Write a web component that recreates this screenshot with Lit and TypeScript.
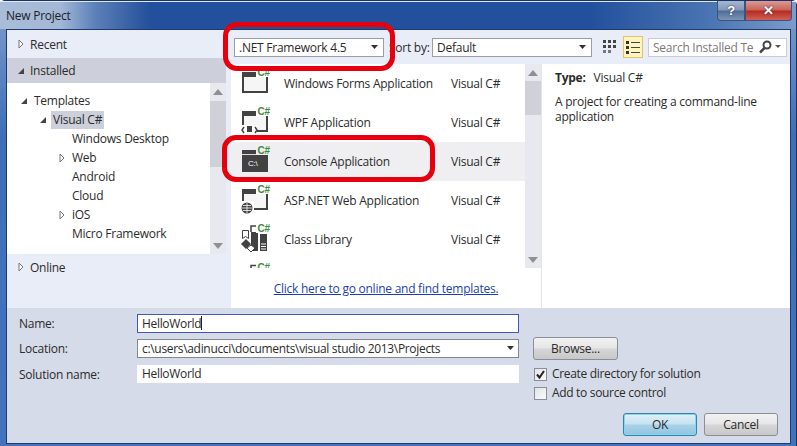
import { LitElement, html, css, svg } from "lit"
import { customElement } from "lit/decorators.js"

const DARK = "#424242"

// green language badge, shared by all template icons
const badge = svg`<rect x="16" y="0" width="15" height="10" fill="var(--row-bg, #fff)"/><text x="17.5" y="9" font-family="Liberation Sans, sans-serif" font-weight="700" font-size="10" fill="#3f8a3f">C#</text>`

const frame = svg`<path d="M3 6h24v19H3z" fill="#f6f6f6" stroke="${DARK}" stroke-width="2"/><rect x="2" y="5" width="26" height="5" fill="${DARK}"/>`

const rowIcons = {
  forms: svg`${frame}${badge}`,
  wpf: svg`${frame}<rect x="1" y="19" width="16" height="10" fill="#fff"/><path d="M4 21l-2 3 2 3M15 21l2 3-2 3" fill="none" stroke="${DARK}" stroke-width="1.5"/><rect x="7" y="20" width="5" height="6" fill="${DARK}"/>${badge}`,
  console: svg`<rect x="2" y="5" width="26" height="22" fill="${DARK}"/><rect x="2" y="9" width="20" height="1" fill="#ddd"/><text x="8" y="21" font-family="Liberation Sans, sans-serif" font-size="8" fill="#fff">C:\\</text>${badge}`,
  web: svg`${frame}<rect x="0" y="17" width="14" height="12" fill="#fff"/><circle cx="7" cy="24" r="5.5" fill="${DARK}"/><path d="M2 24h10M7 19v10M3 21.5h8M3 26.5h8" stroke="#fff" stroke-width=".8"/><rect x="14" y="24" width="14" height="2" fill="${DARK}"/>${badge}`,
  library: svg`<path d="M2.500 7.500h6v8l-3-2-3 2z" fill="#fff" stroke="${DARK}"/><path d="M11 9V3h7" fill="none" stroke="${DARK}" stroke-width="1.500"/><rect x="11" y="9" width="7" height="19" fill="${DARK}"/><path d="M20 11h7v17h-7z" fill="${DARK}"/><path d="M21 21h5M21 23.500h5M21 26h5" stroke="#fff"/><path d="M6 16l5 5-5 5-5-5z" fill="${DARK}"/><path d="M11 22l4 3-4 4-4-4z" fill="#fff" stroke="${DARK}"/>${badge}`,
  more: svg`<path d="M11 9V3.500h6" fill="none" stroke="${DARK}" stroke-width="1.500"/>${badge}`,
}

const templates = [
  { name: "Windows Forms Application", icon: rowIcons.forms },
  { name: "WPF Application", icon: rowIcons.wpf },
  { name: "Console Application", icon: rowIcons.console, selected: true },
  { name: "ASP.NET Web Application", icon: rowIcons.web },
  { name: "Class Library", icon: rowIcons.library },
  { name: "", icon: rowIcons.more },
]

const tree = [
  { label: "Templates", depth: 0, arrow: "open" },
  { label: "Visual C#", depth: 1, arrow: "open", active: true },
  { label: "Windows Desktop", depth: 2 },
  { label: "Web", depth: 2, arrow: "closed" },
  { label: "Android", depth: 2 },
  { label: "Cloud", depth: 2 },
  { label: "iOS", depth: 2, arrow: "closed" },
  { label: "Micro Framework", depth: 2 },
]

function arrow(kind?: string) {
  if (kind === "open") return html`<svg class="arrow" width="8" height="8" viewBox="0 0 8 8"><path d="M7 1v6H1z" fill="#444"/></svg>`
  if (kind === "closed") return html`<svg class="arrow" width="8" height="10" viewBox="0 0 8 10"><path d="M2 1l4 4-4 4z" fill="#fff" stroke="#777"/></svg>`
  return html`<span class="arrow"></span>`
}

const caret = html`<svg class="caret" width="7" height="4" viewBox="0 0 7 4"><path d="M0 0h7L3.500 4z" fill="#333"/></svg>`

function scrollbar(thumbTop: number, thumbHeight: number) {
  return html`<div class="scrollbar">
    <svg class="sb-up" width="10" height="6" viewBox="0 0 10 6"><path d="M5 0l5 6H0z" fill="#8f8f96"/></svg>
    <div class="sb-thumb" style="margin-top:${thumbTop}px;height:${thumbHeight}px"></div>
    <svg class="sb-down" width="10" height="6" viewBox="0 0 10 6"><path d="M0 0h10L5 6z" fill="#8f8f96"/></svg>
  </div>`
}

@customElement("app-root")
export class AppRoot extends LitElement {
  static styles = css`
    :host {
      display: block;
      width: 797px;
      height: 446px;
      overflow: hidden;
      position: relative;
      font: 12px "Open Sans", "Noto Sans", sans-serif;
      letter-spacing: -0.25px;
      color: #2b2b2b;
    }
    .window {
      height: 446px;
      box-sizing: border-box;
      display: flex;
      flex-direction: column;
      border: 1px solid #16336e;
      border-width: 1px 1px 0 0;
      border-radius: 5px 5px 0 0;
      background: linear-gradient(180deg, #7f9dca 0%, #3f6fb9 30%, #4274be 100%);
    }
    .title {
      height: 28px;
      flex: none;
      display: flex;
      align-items: flex-start;
      background: linear-gradient(90deg, #a9bcd8 0, #a4b8d6 60px, #5c80b8 95px, #23509c 150px, #22509c 590px, #4a75b2 710px, #7c9ccb 100%);
      box-shadow: inset 0 1px 0 #e2e8f2;
    }
    .title-text {
      margin: 6px 0 0 6px;
      font-size: 12px;
      color: #1a1f2b;
    }
    .caption {
      margin-left: auto;
      display: flex;
      margin-right: 4px;
    }
    .cap-btn {
      height: 20px;
      box-sizing: border-box;
      display: flex;
      align-items: center;
      justify-content: center;
      border: 1px solid #3c5478;
      border-top: none;
      color: #fff;
      font: 700 13px "Liberation Sans", sans-serif;
      text-shadow: 0 0 2px #223;
    }
    .cap-help {
      width: 28px;
      border-radius: 0 0 0 4px;
      background: linear-gradient(180deg, #a6b8d0 0%, #8298b8 48%, #4f6c98 52%, #7d94b8 100%);
    }
    .cap-close {
      width: 47px;
      border-radius: 0 0 4px 0;
      background: linear-gradient(180deg, #dc9a94 0%, #c8625a 48%, #b42a20 52%, #d0605a 100%);
    }
    .client {
      flex: 1;
      margin: 0 5px 2px 6px;
      display: flex;
      flex-direction: column;
      border: 1px solid #1f3a72;
      min-height: 0;
    }
    .main {
      height: 278px;
      flex: none;
      display: flex;
      background: #e9edf8;
    }
    .side {
      width: 224px;
      flex: none;
      display: flex;
      flex-direction: column;
    }
    .section {
      display: flex;
      align-items: center;
      gap: 5px;
      padding-left: 10px;
    }
    .section.recent {
      height: 28px;
      flex: none;
    }
    .section.installed {
      height: 25px;
      flex: none;
      width: 219px;
      box-sizing: border-box;
      background: #cdd0da;
    }
    .section.online {
      height: 26px;
      flex: none;
    }
    .tree-wrap {
      display: flex;
      height: 171px;
      flex: none;
      width: 219px;
    }
    .tree {
      flex: 1;
      background: #fff;
      padding-top: 8px;
      box-sizing: border-box;
    }
    .tree-item {
      height: 19px;
      display: flex;
      align-items: center;
    }
    .tree-item .arrow {
      width: 8px;
      flex: none;
      margin-right: 4px;
    }
    .tree-label {
      padding: 0 2px;
      line-height: 18px;
    }
    .tree-label.active {
      background: #cdd0da;
    }
    .d0 { padding-left: 13px; }
    .d1 { padding-left: 32px; }
    .d2 { padding-left: 51px; }
    .scrollbar {
      width: 16px;
      flex: none;
      background: #e8e9ef;
      display: flex;
      flex-direction: column;
      align-items: center;
      box-sizing: border-box;
      padding: 6px 0 5px;
    }
    .sb-thumb {
      width: 100%;
      background: #d0d1d8;
    }
    .sb-down {
      margin-top: auto;
    }
    .center {
      flex: 1;
      min-width: 0;
      display: flex;
      flex-direction: column;
    }
    .toolbar {
      height: 34px;
      flex: none;
      display: flex;
      align-items: center;
      padding-left: 3px;
      box-sizing: border-box;
    }
    .combo {
      height: 19px;
      box-sizing: border-box;
      background: #fff;
      border: 1px solid #9a9ca8;
      display: flex;
      align-items: center;
      padding: 0 5px 0 4px;
    }
    .combo .caret {
      margin-left: auto;
    }
    .framework { width: 150px; }
    .sort-label {
      width: 48px;
      flex: none;
      box-sizing: border-box;
      padding-left: 5px;
      white-space: nowrap;
    }
    .sort { width: 160px; }
    .view-grid {
      margin-left: 10px;
      width: 16px;
      height: 16px;
    }
    .view-list {
      margin-left: 5px;
      width: 20px;
      height: 22px;
      box-sizing: border-box;
      background: #fdf4bf;
      border: 1px solid #e5c365;
      display: flex;
      align-items: center;
      justify-content: center;
    }
    .search {
      margin-left: 5px;
      width: 139px;
      height: 19px;
      box-sizing: border-box;
      background: #fff;
      border: 1px solid #c8ccd8;
      display: flex;
      align-items: center;
      padding: 0 3px 0 4px;
      color: #7a7a7a;
      overflow: hidden;
    }
    .search-text {
      flex: 1;
      white-space: nowrap;
      overflow: hidden;
    }
    .panes {
      flex: 1;
      display: flex;
      background: #fff;
      min-height: 0;
    }
    .list-col {
      width: 310px;
      flex: none;
      border-right: 1px solid #e4e5ec;
      display: flex;
      flex-direction: column;
    }
    .list-wrap {
      height: 204px;
      flex: none;
      display: flex;
    }
    .list {
      flex: 1;
      overflow: hidden;
    }
    .row {
      height: 39px;
      display: flex;
      align-items: center;
      --row-bg: #fff;
    }
    .row.selected {
      background: #efeff2;
      --row-bg: #efeff2;
    }
    .row-icon {
      margin: 3px 0 0 9px;
      flex: none;
      align-self: flex-start;
    }
    .row-name {
      margin-left: 11px;
      width: 167px;
      flex: none;
    }
    .link-row {
      flex: 1;
      display: flex;
      align-items: center;
      justify-content: center;
    }
    .link {
      color: #1c3fae;
      text-decoration: underline;
    }
    .details {
      flex: 1;
      padding: 6px 13px;
      line-height: 15px;
    }
    .type-line {
      margin-bottom: 9px;
    }
    .type-line b {
      font-weight: 700;
      margin-right: 5px;
    }
    .footer {
      flex: 1;
      background: #d6dbe9;
      display: flex;
      padding: 6px 0 0 12px;
      min-height: 0;
    }
    .form {
      width: 500px;
      flex: none;
      display: grid;
      grid-template-columns: 118px 382px;
      grid-template-rows: 25px 26px 25px;
      align-content: start;
      align-items: start;
    }
    .form-label {
      line-height: 19px;
    }
    .field {
      height: 18px;
      box-sizing: border-box;
      background: #fff;
      display: flex;
      align-items: center;
      padding: 0 4px 1px;
      border: 1px solid #fff;
      letter-spacing: -0.32px;
    }
    .field.focus {
      height: 19px;
      border-color: #4458b8;
    }
    .field.location {
      height: 19px;
      border-color: #85878f;
    }
    .field.location .caret {
      margin-left: auto;
    }
    .cursor {
      width: 1px;
      height: 14px;
      background: #222;
    }
    .options {
      flex: 1;
      margin-left: 14px;
      padding-top: 23px;
      display: flex;
      flex-direction: column;
      align-items: flex-start;
    }
    .btn {
      box-sizing: border-box;
      height: 23px;
      border: 1px solid #8a8e98;
      border-radius: 3px;
      background: linear-gradient(180deg, #f2f2f2 0%, #e6e6e6 48%, #d6d6d6 52%, #c8c8c8 100%);
      display: flex;
      align-items: center;
      justify-content: center;
    }
    .browse {
      width: 85px;
      margin-bottom: 5px;
    }
    .check {
      height: 19px;
      display: flex;
      align-items: center;
      gap: 5px;
      margin-left: 1px;
    }
    .check-text {
      margin-top: -2px;
      letter-spacing: -0.32px;
    }
    .box {
      width: 13px;
      height: 13px;
      box-sizing: border-box;
      border: 1px solid #8a8e98;
      background: linear-gradient(135deg, #e2e4ea, #fafafa);
      display: flex;
    }
    .actions {
      display: flex;
      gap: 7px;
      margin: 10px 0 0 90px;
    }
    .actions .btn {
      width: 74px;
      height: 23px;
    }
    .ok {
      border-color: #2d86ae;
      box-shadow: inset 0 0 0 1px #8ad4ee;
      background: linear-gradient(180deg, #e0f0f8 0%, #c6e2f0 48%, #a9d2e8 52%, #90c4e0 100%);
    }
    /* red annotation marks drawn on top of the dialog */
    .mark {
      position: absolute;
      box-sizing: border-box;
      border: 5px solid #e6000e;
      border-radius: 14px;
      pointer-events: none;
    }
    .mark-framework {
      left: 223px;
      top: 22px;
      width: 172px;
      height: 49px;
    }
    .mark-console {
      left: 222px;
      top: 135px;
      width: 213px;
      height: 47px;
    }
  `

  render() {
    return html`
      <div class="window">
        <div class="title">
          <span class="title-text">New Project</span>
          <div class="caption">
            <div class="cap-btn cap-help">?</div>
            <div class="cap-btn cap-close">✕</div>
          </div>
        </div>
        <div class="client">
          <div class="main">
            <div class="side">
              <div class="section recent">${arrow("closed")}<span>Recent</span></div>
              <div class="section installed">${arrow("open")}<span>Installed</span></div>
              <div class="tree-wrap">
                <div class="tree">
                  ${tree.map(t => html`
                    <div class="tree-item d${t.depth}">
                      ${arrow(t.arrow)}
                      <span class="tree-label ${t.active ? "active" : ""}">${t.label}</span>
                    </div>
                  `)}
                </div>
                ${scrollbar(6, 66)}
              </div>
              <div class="section online">${arrow("closed")}<span>Online</span></div>
            </div>
            <div class="center">
              <div class="toolbar">
                <div class="combo framework"><span>.NET Framework 4.5</span>${caret}</div>
                <span class="sort-label">Sort by:</span>
                <div class="combo sort"><span>Default</span>${caret}</div>
                <svg class="view-grid" viewBox="0 0 16 16">
                  <path d="M1 1h3v3H1zM6 1h3v3H6zM11 1h3v3h-3zM1 6h3v3H1zM6 6h3v3H6zM11 6h3v3h-3z" fill="#444"/>
                  <path d="M1 11h3v3H1zM6 11h3v3H6z" fill="#777"/>
                </svg>
                <div class="view-list">
                  <svg width="14" height="14" viewBox="0 0 14 14">
                    <path d="M0 1h3v3H0zM0 6h3v3H0zM0 11h3v3H0z" fill="#333"/>
                    <path d="M5 2h9v1H5zM5 7h9v1H5zM5 12h9v1H5z" fill="#444"/>
                  </svg>
                </div>
                <div class="search">
                  <span class="search-text">Search Installed Te</span>
                  <svg width="26" height="14" viewBox="0 0 26 14">
                    <circle cx="10" cy="5" r="3.500" fill="none" stroke="#444" stroke-width="2"/>
                    <path d="M7.500 8L3 12.500" stroke="#444" stroke-width="2.500"/>
                    <path d="M18 5h6l-3 3z" fill="#555"/>
                  </svg>
                </div>
              </div>
              <div class="panes">
                <div class="list-col">
                  <div class="list-wrap">
                    <div class="list">
                      ${templates.map(t => html`
                        <div class="row ${t.selected ? "selected" : ""}">
                          <svg class="row-icon" width="33" height="30" viewBox="0 0 33 30">${t.icon}</svg>
                          ${t.name ? html`<span class="row-name">${t.name}</span><span>Visual C#</span>` : ""}
                        </div>
                      `)}
                    </div>
                    ${scrollbar(5, 34)}
                  </div>
                  <div class="link-row"><span class="link">Click here to go online and find templates.</span></div>
                </div>
                <div class="details">
                  <div class="type-line"><b>Type:</b> Visual C#</div>
                  <div>A project for creating a command-line application</div>
                </div>
              </div>
            </div>
          </div>
          <div class="footer">
            <div class="form">
              <span class="form-label">Name:</span>
              <div class="field focus">HelloWorld<span class="cursor"></span></div>
              <span class="form-label">Location:</span>
              <div class="field location"><span>c:\\users\\adinucci\\documents\\visual studio 2013\\Projects</span>${caret}</div>
              <span class="form-label">Solution name:</span>
              <div class="field">HelloWorld</div>
            </div>
            <div class="options">
              <div class="btn browse">Browse...</div>
              <div class="check">
                <span class="box"><svg width="11" height="11" viewBox="0 0 11 11"><path d="M2 5.500l2.500 3L9 2" fill="none" stroke="#222" stroke-width="2"/></svg></span>
                <span class="check-text">Create directory for solution</span>
              </div>
              <div class="check">
                <span class="box"></span>
                <span class="check-text">Add to source control</span>
              </div>
              <div class="actions">
                <div class="btn ok">OK</div>
                <div class="btn">Cancel</div>
              </div>
            </div>
          </div>
        </div>
      </div>
      <div class="mark mark-framework"></div>
      <div class="mark mark-console"></div>
    `
  }
}
